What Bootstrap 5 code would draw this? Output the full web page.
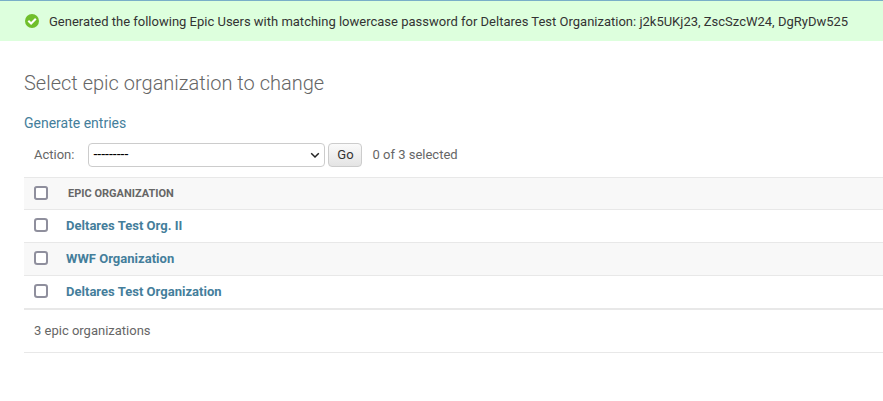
<!DOCTYPE html>
<html lang="en">
<head>
<meta charset="utf-8">
<title>Select epic organization to change</title>
<link href="https://cdn.jsdelivr.net/npm/bootstrap@5.3.0/dist/css/bootstrap.min.css" rel="stylesheet">
<style>
body{font-family:Roboto,"Liberation Sans",sans-serif;font-size:13px;line-height:20px;color:#666;background:#fff;overflow:hidden}
a{color:#447e9b}
.notice{height:41px;border-top:1px solid #79aec8;background:#dfd;color:#333;padding-left:25px}
.notice svg{margin-right:10px}
.notice span{padding-top:2px}
.page-body{padding-left:24px}
h1{font-size:20px;font-weight:300;line-height:24px;margin:30px 0 0}
.generate{font-size:14px;line-height:20px;margin-top:18px}
.actions{height:44px;padding-left:10px}
.actions select{width:237px;height:24px;margin-left:14px;font-size:14px;padding:0 0 2px 4px;border:1px solid #ccc;border-radius:4px;color:#000;line-height:20px;background-image:none}
.picker svg{position:absolute;right:5px;top:9px;pointer-events:none}
.go{width:34px;height:24px;margin:0 10px 0 3px;padding:0;font-size:13px;line-height:22px;color:#333;border:1px solid #ccc;border-radius:4px;background:linear-gradient(#fafafa,#e4e4e4)}
.line{height:33px;padding-left:10px;border-bottom:1px solid #e8e8e8}
.line.head{border-top:1px solid #e8e8e8;font-size:11px}
.line.head span{margin-left:2px}
.line.head,.line.shaded{background:#f8f8f8}
.line a{letter-spacing:.02px}
.line input{width:14px;height:14px;margin:0 18px 2px 0;border:2px solid #8f8f9d;border-radius:2px;background-color:#fff}
.total{height:44px;padding:0 0 1px 10px;border-bottom:1px solid #e8e8e8;border-top:1px solid #e8e8e8}
</style>
<script src="https://cdn.jsdelivr.net/npm/bootstrap@5.3.0/dist/js/bootstrap.bundle.min.js"></script>
</head>
<body>
<div class="notice d-flex align-items-center"><svg width="14" height="14" viewBox="0 0 14 14"><circle cx="7" cy="7" r="7" fill="#70bf2b"/><path d="M3.3 6.8 6.1 9.5 10.8 4.8" fill="none" stroke="#fff" stroke-width="2.1"/></svg><span>Generated the following Epic Users with matching lowercase password for Deltares Test Organization: j2k5UKj23, ZscSzcW24, DgRyDw525</span></div>
<main class="page-body">
<h1>Select epic organization to change</h1>
<div class="generate"><a class="text-decoration-none" href="#">Generate entries</a></div>
<form class="actions d-flex align-items-center"><label for="action">Action:</label><div class="picker position-relative d-flex"><select id="action" class="form-select"><option>---------</option></select><svg width="10" height="7" viewBox="0 0 10 7"><path d="M1.2 1.2 5 5 8.8 1.2" fill="none" stroke="#222" stroke-width="1.5"/></svg></div><button type="button" class="btn go">Go</button><span>0 of 3 selected</span></form>
<div class="line head d-flex align-items-center fw-bold"><input class="form-check-input" type="checkbox" aria-label="Select all"><span>EPIC ORGANIZATION</span></div>
<div class="line d-flex align-items-center fw-bold"><input class="form-check-input" type="checkbox" aria-label="Select"><a class="text-decoration-none" href="#">Deltares Test Org. II</a></div>
<div class="line shaded d-flex align-items-center fw-bold"><input class="form-check-input" type="checkbox" aria-label="Select"><a class="text-decoration-none" href="#">WWF Organization</a></div>
<div class="line d-flex align-items-center fw-bold"><input class="form-check-input" type="checkbox" aria-label="Select"><a class="text-decoration-none" href="#">Deltares Test Organization</a></div>
<div class="total d-flex align-items-center">3 epic organizations</div>
</main>
</body>
</html>
